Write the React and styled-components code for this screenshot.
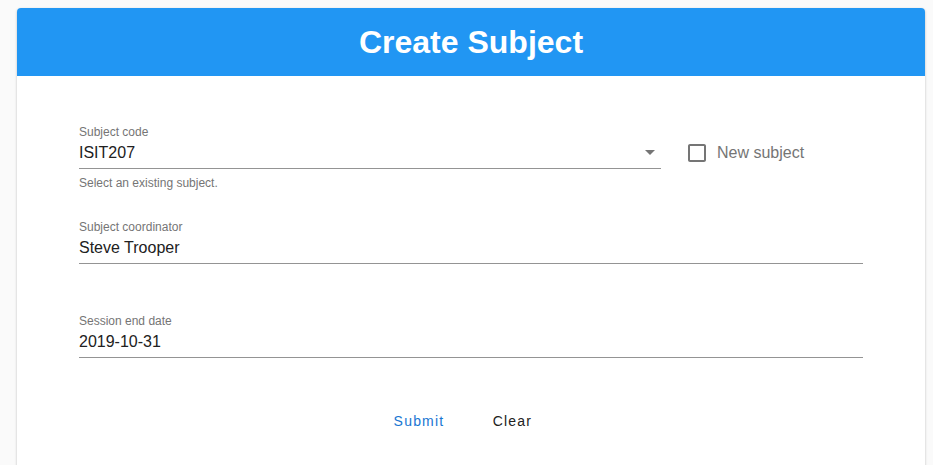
import React from 'react'
import styled, { createGlobalStyle } from 'styled-components';

const GlobalStyle = createGlobalStyle`
  body{
    margin : 0;
    background : #fafafa;
    font-family : "Liberation Sans", Arial, sans-serif;
  }
`;

const CreateSubject = () => {
  return (
    <Page>
      <GlobalStyle />
      <Card>
        <Header>
          <Title>Create Subject</Title>
        </Header>
        <Form>
          <Row>
            <Field width="582px">
              <Label>Subject code</Label>
              <InputBox>
                <Value>ISIT207</Value>
                <Arrow viewBox="0 0 24 24">
                  <path d="M7 10l5 5 5-5z" />
                </Arrow>
              </InputBox>
              <Helper>Select an existing subject.</Helper>
            </Field>
            <CheckLabel>
              <CheckIcon viewBox="0 0 24 24">
                <path d="M19 5v14H5V5h14m0-2H5c-1.1 0-2 .9-2 2v14c0 1.1.9 2 2 2h14c1.1 0 2-.9 2-2V5c0-1.1-.9-2-2-2z" />
              </CheckIcon>
              <CheckText>New subject</CheckText>
            </CheckLabel>
          </Row>
          <Field>
            <Label>Subject coordinator</Label>
            <InputBox>
              <Value>Steve Trooper</Value>
            </InputBox>
            <Helper />
          </Field>
          <Field>
            <Label>Session end date</Label>
            <InputBox>
              <Value>2019-10-31</Value>
            </InputBox>
            <Helper />
          </Field>
          <Buttons>
            <TextButton primary>Submit</TextButton>
            <TextButton>Clear</TextButton>
          </Buttons>
        </Form>
      </Card>
    </Page>
  )
}

const Page = styled.div`
  padding : 8px 8px 0 17px;
`;

const Card = styled.div`
  background : white;
  border-radius : 4px;
  box-shadow : 0 1px 3px rgba(0,0,0,0.2), 0 1px 1px rgba(0,0,0,0.14), 0 2px 1px -1px rgba(0,0,0,0.12);
  padding-bottom : 40px;
`;

const Header = styled.div`
  background : #2196f3;
  border-radius : 4px 4px 0 0;
  height : 68px;
  display : flex;
  align-items : center;
  justify-content : center;
`;

const Title = styled.h1`
  margin : 0;
  color : white;
  font-size : 32px;
  font-weight : bold;
  line-height : 68px;
`;

const Form = styled.div`
  display : flex;
  flex-direction : column;
  gap : 30px;
  padding : 49px 62px 0;
`;

const Row = styled.div`
  display : flex;
  align-items : flex-start;
`;

const Field = styled.div`
  display : flex;
  flex-direction : column;
  flex : 0 0 ${props => props.width || '100%'};
  width : ${props => props.width || '100%'};
`;

const Label = styled.label`
  font-size : 12px;
  line-height : 14px;
  color : #757575;
`;

const InputBox = styled.div`
  display : flex;
  align-items : center;
  justify-content : space-between;
  padding : 4px 0 6px;
  border-bottom : 1px solid #949494;
`;

const Value = styled.span`
  font-size : 16px;
  line-height : 19px;
  color : #212121;
`;

const Arrow = styled.svg`
  width : 24px;
  height : 24px;
  margin : -3px -1px -2px 0;
  fill : #757575;
`;

const Helper = styled.p`
  margin : 7px 0 0;
  font-size : 12px;
  line-height : 14px;
  min-height : 13px;
  color : #757575;
  &:empty{
    height : 13px;
  }
`;

const CheckLabel = styled.label`
  display : flex;
  align-items : flex-start;
  margin : 16px 0 0 24px;
`;

const CheckIcon = styled.svg`
  width : 24px;
  height : 24px;
  fill : #757575;
`;

const CheckText = styled.span`
  margin : 3px 0 0 8px;
  font-size : 16px;
  line-height : 18px;
  color : #757575;
`;

const Buttons = styled.div`
  display : flex;
  justify-content : center;
  gap : 28px;
  padding-right : 12px;
  margin-top : -5px;
`;

const TextButton = styled.button`
  min-width : 64px;
  padding : 6px 8px;
  border : none;
  background : none;
  font-family : "Liberation Sans", Arial, sans-serif;
  font-size : 14px;
  line-height : 24px;
  letter-spacing : 1.2px;
  color : ${props => props.primary ? '#1976d2' : '#212121'};
  cursor : pointer;
`;

export default CreateSubject
